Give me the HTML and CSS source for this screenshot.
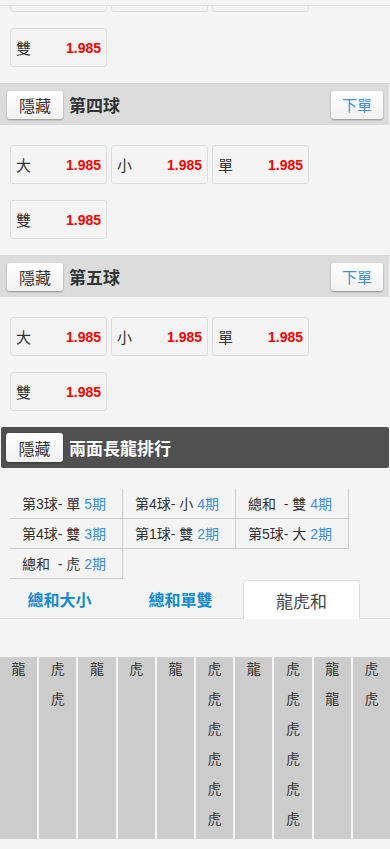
FILE: index.html
```html
<!DOCTYPE html>
<html lang="zh-Hant">
<head>
<meta charset="utf-8">
<meta name="viewport" content="width=device-width, initial-scale=1">
<link rel="stylesheet" href="styles.css">
</head>
<body>
<div class="topbar"></div>

<div class="odds cut">
  <div class="cell"></div>
  <div class="cell"></div>
  <div class="cell"></div>
  <div class="cell"><span class="lbl">雙</span><span class="val">1.985</span></div>
</div>

<div class="bar">
  <button class="btn">隱藏</button>
  <span class="title">第四球</span>
  <button class="btn order">下單</button>
</div>
<div class="odds">
  <div class="cell"><span class="lbl">大</span><span class="val">1.985</span></div>
  <div class="cell"><span class="lbl">小</span><span class="val">1.985</span></div>
  <div class="cell"><span class="lbl">單</span><span class="val">1.985</span></div>
  <div class="cell"><span class="lbl">雙</span><span class="val">1.985</span></div>
</div>

<div class="bar">
  <button class="btn">隱藏</button>
  <span class="title">第五球</span>
  <button class="btn order">下單</button>
</div>
<div class="odds">
  <div class="cell"><span class="lbl">大</span><span class="val">1.985</span></div>
  <div class="cell"><span class="lbl">小</span><span class="val">1.985</span></div>
  <div class="cell"><span class="lbl">單</span><span class="val">1.985</span></div>
  <div class="cell"><span class="lbl">雙</span><span class="val">1.985</span></div>
</div>

<div class="bar dark">
  <button class="btn">隱藏</button>
  <span class="title">兩面長龍排行</span>
</div>

<div class="rank">
  <div class="rc">第3球- 單 <span class="n">5期</span></div>
  <div class="rc">第4球- 小 <span class="n">4期</span></div>
  <div class="rc">總和&nbsp; - 雙 <span class="n">4期</span></div>
  <div class="rc">第4球- 雙 <span class="n">3期</span></div>
  <div class="rc">第1球- 雙 <span class="n">2期</span></div>
  <div class="rc">第5球- 大 <span class="n">2期</span></div>
  <div class="rc">總和&nbsp; - 虎 <span class="n">2期</span></div>
</div>

<div class="tabs">
  <div class="tab">總和大小</div>
  <div class="tab">總和單雙</div>
  <div class="tab active">龍虎和</div>
</div>

<div class="road">
  <div class="col"><span>龍</span></div>
  <div class="col"><span>虎</span><span>虎</span></div>
  <div class="col"><span>龍</span></div>
  <div class="col"><span>虎</span></div>
  <div class="col"><span>龍</span></div>
  <div class="col"><span>虎</span><span>虎</span><span>虎</span><span>虎</span><span>虎</span><span>虎</span></div>
  <div class="col"><span>龍</span></div>
  <div class="col"><span>虎</span><span>虎</span><span>虎</span><span>虎</span><span>虎</span><span>虎</span></div>
  <div class="col"><span>龍</span><span>龍</span></div>
  <div class="col"><span>虎</span><span>虎</span></div>
</div>
</body>
</html>
```

FILE: styles.css
```css
html, body {
  margin: 0;
  padding: 0;
  background: #f4f4f4;
  font-family: "Liberation Sans", "Noto Sans CJK TC", sans-serif;
  color: #333;
  overflow: hidden;
}

.topbar {
  position: fixed;
  top: 0;
  left: 0;
  right: 0;
  height: 5px;
  background: #f4f4f4;
  border-bottom: 1px solid #e4e4e4;
  z-index: 5;
}

.odds {
  display: flex;
  flex-wrap: wrap;
  gap: 16px 4px;
  padding: 20px 10px 16px;
  width: 310px;
}
.odds.cut {
  margin-top: -47px;
}

.cell {
  box-sizing: border-box;
  width: 97px;
  height: 39px;
  border: 1px solid #dedede;
  border-radius: 3px;
  display: flex;
  align-items: center;
  justify-content: space-between;
  padding: 0 5px 0 5px;
  font-size: 15px;
}
.lbl { color: #333; }
.val { color: #ff0000; font-weight: bold; font-size: 14px; }

.bar {
  box-sizing: border-box;
  height: 42px;
  margin-right: 1px;
  background: #dcdcdc;
  border-top: 1px solid #d2d2d2;
  display: flex;
  align-items: center;
  padding: 0 6px 0 7px;
}
.bar.dark {
  background: #505050;
  border-top: none;
  height: 41px;
  margin: 0 1px;
  padding-left: 5px;
  border-radius: 2px;
}

.btn {
  box-sizing: border-box;
  height: 28px;
  width: 56px;
  border: none;
  border-radius: 3px;
  background: linear-gradient(#ffffff, #f1f1f1);
  box-shadow: 0 1px 2px rgba(0,0,0,0.35);
  font-family: "Liberation Sans", "Noto Sans CJK TC", sans-serif;
  font-size: 16px;
  color: #333;
  padding: 0;
}
.dark .btn { height: 29px; width: 57px; }
.btn.order {
  margin-left: auto;
  width: 52px;
  font-size: 15px;
  color: #3a8ee0;
}

.title {
  margin-left: 6px;
  font-size: 17px;
  font-weight: bold;
  color: #333;
}
.dark .title { color: #fff; }

.rank {
  display: grid;
  grid-template-columns: repeat(3, 113px);
  margin: 21px 0 0 10px;
}
.rc {
  box-sizing: border-box;
  height: 30px;
  line-height: 30px;
  border-right: 1px solid #cccccc;
  border-bottom: 1px solid #cccccc;
  padding-left: 12px;
  font-size: 14px;
  color: #333;
  white-space: nowrap;
}
.rc .n { color: #3a8ee0; }

.tabs {
  display: flex;
  gap: 4px;
  padding-left: 1px;
  margin-top: 1px;
  height: 38px;
  border-bottom: 1px solid #dddddd;
}
.tab {
  box-sizing: border-box;
  width: 117px;
  height: 38px;
  display: flex;
  align-items: center;
  justify-content: center;
  font-size: 16px;
  font-weight: bold;
  color: #168ad3;
}
.tab.active {
  height: 39px;
  background: #fff;
  border: 1px solid #dddddd;
  border-bottom: none;
  border-radius: 4px 4px 0 0;
  color: #444;
  font-weight: normal;
  font-size: 17px;
}

.road {
  display: grid;
  grid-template-columns: repeat(10, 1fr);
  gap: 2px;
  margin-top: 38px;
}
.col {
  background: #cccccc;
  height: 182px;
  display: flex;
  flex-direction: column;
  align-items: center;
}
.col span {
  display: block;
  height: 24px;
  line-height: 24px;
  margin-bottom: 6px;
  font-size: 14px;
  color: #333;
}
```
